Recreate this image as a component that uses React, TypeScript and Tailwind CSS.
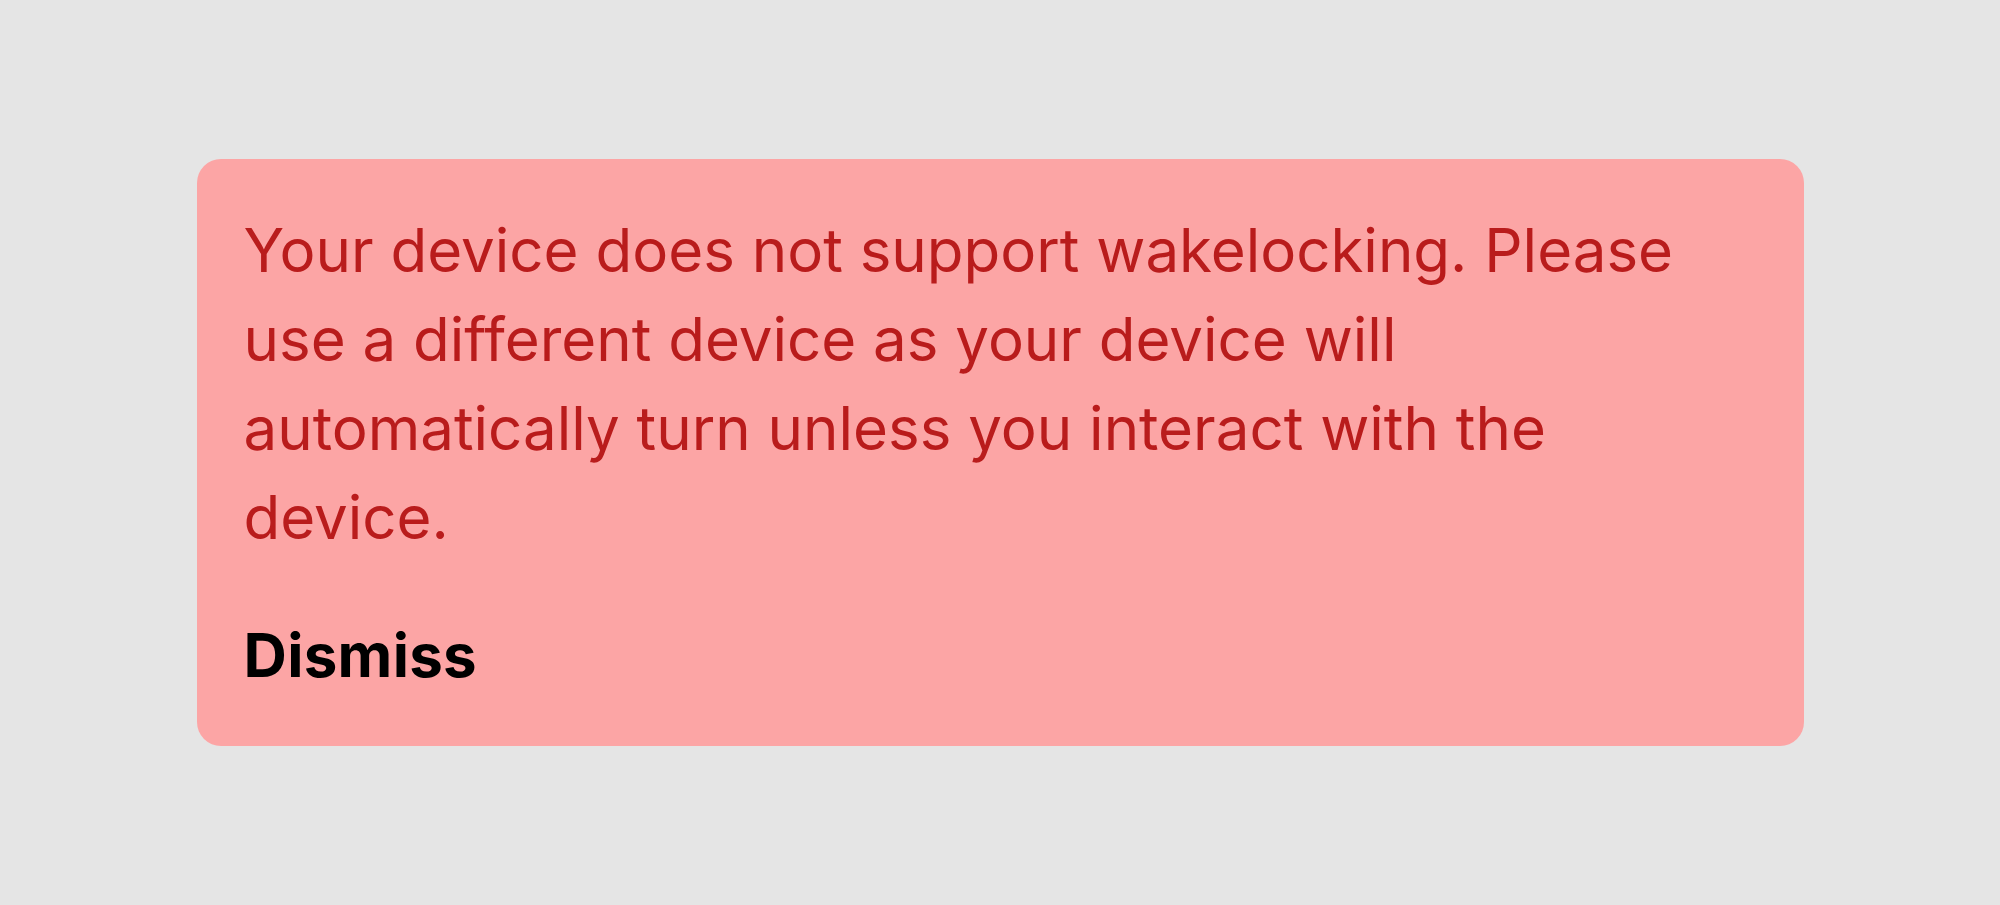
export default function App() {
  return (
    <div className="flex h-[905px] w-full items-center justify-center bg-[#e5e5e5] font-['Inter',sans-serif]">
      {/* WAKELOCK WARNING */}
      <div className="w-[1607px] rounded-[24px] bg-[#fca5a5] pt-[47px] pr-12 pb-[46px] pl-[47px]">
        <p className="text-[60px] leading-[89px] text-[#b91c1c]">
          Your device does not support wakelocking. Please use a different
          device as your device will automatically turn unless you interact
          with the device.
        </p>

        <button className="mt-[49px] block text-[60px] leading-[89px] font-bold tracking-[0.3px] text-black">
          Dismiss
        </button>
      </div>
    </div>
  );
}
